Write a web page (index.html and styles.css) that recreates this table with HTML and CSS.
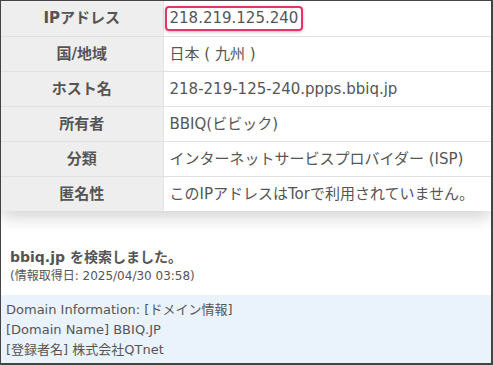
FILE: index.html
```html
<!DOCTYPE html>
<html lang="ja">
<head>
<meta charset="utf-8">
<link rel="stylesheet" href="styles.css">
</head>
<body>
<div class="frame">
  <table class="info">
    <tr><th>IPアドレス</th><td><span class="ip">218.219.125.240</span></td></tr>
    <tr><th>国/地域</th><td>日本 ( 九州 )</td></tr>
    <tr><th>ホスト名</th><td>218-219-125-240.ppps.bbiq.jp</td></tr>
    <tr><th>所有者</th><td>BBIQ(ビビック)</td></tr>
    <tr><th>分類</th><td>インターネットサービスプロバイダー (ISP)</td></tr>
    <tr><th>匿名性</th><td>このIPアドレスはTorで利用されていません。</td></tr>
  </table>
  <div class="search">
    <p class="title">bbiq.jp を検索しました。</p>
    <p class="date">(情報取得日: 2025/04/30 03:58)</p>
  </div>
  <div class="whois">
    <p>Domain Information: [ドメイン情報]</p>
    <p>[Domain Name] BBIQ.JP</p>
    <p>[登録者名] 株式会社QTnet</p>
  </div>
</div>
</body>
</html>
```
FILE: styles.css
```css
html, body {
  margin: 0;
  padding: 0;
  background: #fff;
}
.frame {
  width: 493px;
  height: 365px;
  box-sizing: border-box;
  border-style: solid;
  border-color: #444;
  border-width: 1px 2px 2px 1px;
  overflow: hidden;
  font-family: "DejaVu Sans", "Noto Sans CJK JP", sans-serif;
  color: #555;
  display: flex;
  flex-direction: column;
}
.info {
  width: 100%;
  border-collapse: collapse;
  box-shadow: 0 6px 16px rgba(0, 0, 0, 0.18);
  position: relative;
  z-index: 1;
}
.info th, .info td {
  height: 35px;
  padding: 0;
  border-bottom: 1px solid #e0e0e0;
  font-size: 15px;
  line-height: 20px;
  box-sizing: border-box;
}
.info tr:last-child th, .info tr:last-child td {
  border-bottom: 0;
}
.info th {
  width: 162px;
  background: #eeeeee;
  font-weight: bold;
  text-align: center;
  border-right: 1px solid #e4e4e4;
}
.info td {
  background: #fff;
  text-align: left;
  padding-left: 6px;
}
.ip {
  display: inline-block;
  border: 2px solid #e8336a;
  border-radius: 4px;
  padding: 1px 3px 1px 3px;
  margin-left: -5px;
  font-size: 15px;
  line-height: 19px;
  box-shadow: 0 1px 3px rgba(0, 0, 0, 0.25);
}
.search {
  padding: 36px 0 10px 9px;
}
.search p {
  margin: 0;
}
.title {
  font-weight: bold;
  font-size: 14px;
  line-height: 20px;
}
.date {
  font-size: 12px;
  line-height: 18px;
}
.whois {
  flex: 1;
  background: #eaf3fc;
  padding: 5px 0 0 5px;
}
.whois p {
  margin: 0;
  font-size: 13px;
  line-height: 20px;
}
```
